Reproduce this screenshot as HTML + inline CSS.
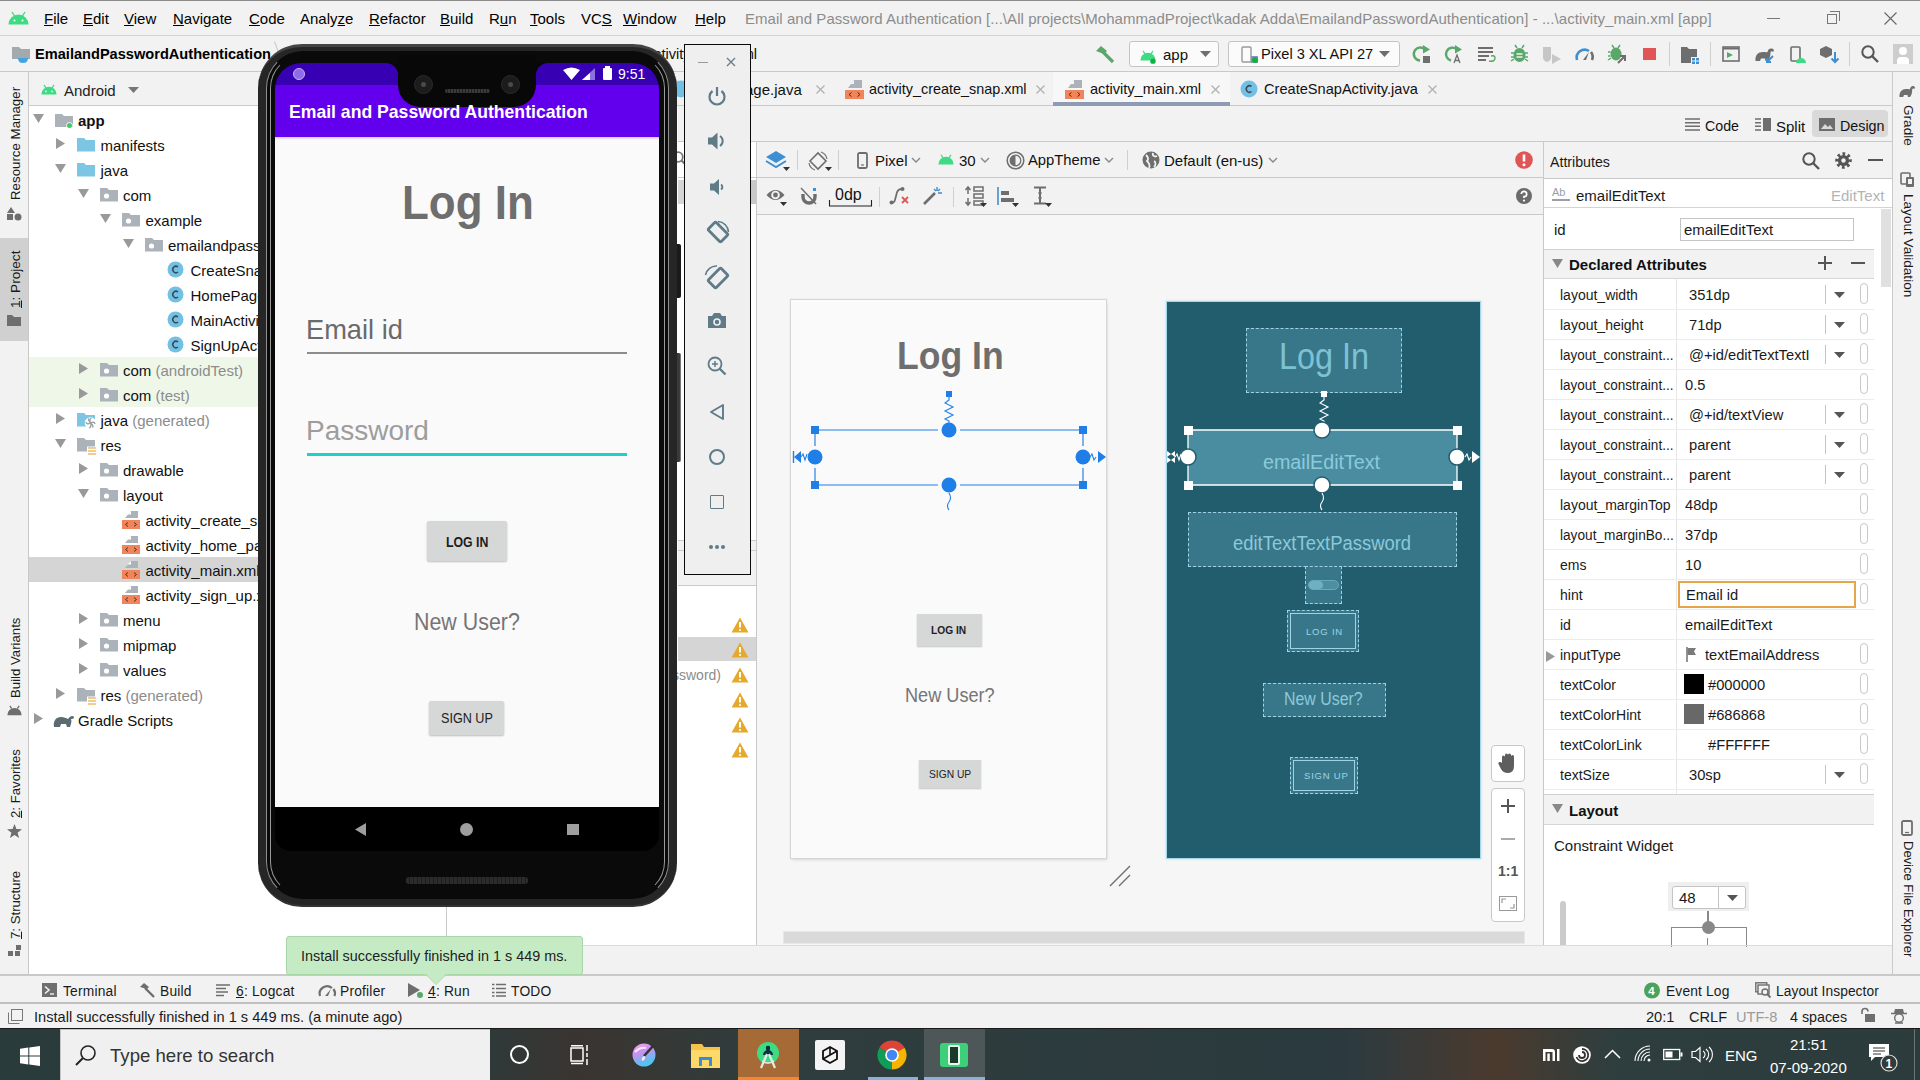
<!DOCTYPE html>
<html><head><meta charset="utf-8">
<style>
*{box-sizing:border-box;margin:0;padding:0}
html,body{width:1920px;height:1080px;overflow:hidden;background:#f2f2f2;font-family:"Liberation Sans",sans-serif;font-size:15px;color:#000}
.a{position:absolute}
.t{position:absolute;white-space:nowrap;line-height:1}
.hl{position:absolute;height:1px;background:#c9c9c9}
.vl{position:absolute;width:1px;background:#c9c9c9}
svg{position:absolute;overflow:visible}
</style></head><body>

<!-- ===== TITLE / MENU BAR ===== -->
<div class="a" style="left:0;top:0;width:1920px;height:1px;background:#8a8a8a"></div>
<div class="a" style="left:0;top:1px;width:1920px;height:35px;background:#f2f2f2"></div>
<div class="hl" style="left:0;top:35px;width:1920px;background:#d4d4d4"></div>
<svg style="left:8px;top:11px" width="21" height="14" viewBox="0 0 21 14"><path d="M0.5 13.5 A10 10 0 0 1 20.5 13.5 Z" fill="#3ddc84"/><path d="M4 1 L6.5 5 M17 1 L14.5 5" stroke="#3ddc84" stroke-width="1.4"/><circle cx="6.5" cy="9.5" r="1" fill="#fff"/><circle cx="14.5" cy="9.5" r="1" fill="#fff"/></svg>
<div id="menu">
<span class="t" style="left:44px;top:11px"><u>F</u>ile</span>
<span class="t" style="left:83px;top:11px"><u>E</u>dit</span>
<span class="t" style="left:124px;top:11px"><u>V</u>iew</span>
<span class="t" style="left:173px;top:11px"><u>N</u>avigate</span>
<span class="t" style="left:249px;top:11px"><u>C</u>ode</span>
<span class="t" style="left:300px;top:11px">Analy<u>z</u>e</span>
<span class="t" style="left:369px;top:11px"><u>R</u>efactor</span>
<span class="t" style="left:440px;top:11px"><u>B</u>uild</span>
<span class="t" style="left:489px;top:11px">R<u>u</u>n</span>
<span class="t" style="left:530px;top:11px"><u>T</u>ools</span>
<span class="t" style="left:581px;top:11px">VC<u>S</u></span>
<span class="t" style="left:623px;top:11px"><u>W</u>indow</span>
<span class="t" style="left:695px;top:11px"><u>H</u>elp</span>
<span class="t" style="left:745px;top:11px;color:#8c8c8c;letter-spacing:0.05px">Email and Password Authentication [...\All projects\MohammadProject\kadak Adda\EmailandPasswordAuthentication] - ...\activity_main.xml [app]</span>
</div>
<div class="a" style="left:1767px;top:18px;width:13px;height:1px;background:#777"></div>
<div class="a" style="left:1827px;top:14px;width:10px;height:10px;border:1px solid #777;border-top-width:1px"></div>
<div class="a" style="left:1830px;top:11px;width:10px;height:10px;border-top:1px solid #777;border-right:1px solid #777"></div>
<svg style="left:1884px;top:12px" width="13" height="13"><path d="M0.5 0.5 L12.5 12.5 M12.5 0.5 L0.5 12.5" stroke="#666" stroke-width="1.1"/></svg>

<!-- ===== NAV / TOOLBAR ===== -->
<div class="hl" style="left:0;top:71px;width:1920px;background:#c9c9c9"></div>
<svg style="left:12px;top:46px" width="20" height="18"><path d="M0 1 H7 L9 3 H18 V13 H0 Z" fill="#a4a9ae"/><path d="M6 12 H16 Q16 17 11 17 Q6 17 6 12 Z" fill="#40a5e0"/></svg>
<span class="t" style="left:35px;top:47px;font-weight:bold;font-size:14.6px">EmailandPasswordAuthentication</span>
<svg style="left:274px;top:41px" width="6" height="14"><path d="M0.5 0.5 L5 13" stroke="#c4c4c4" stroke-width="1"/></svg>
<span class="t" style="left:646px;top:47px;font-size:14.6px;color:#111">activity_main.xml</span>

<!--TOOLBAR-->
<!-- ===== MAIN TOOLBAR ICONS ===== -->
<svg style="left:1095px;top:45px" width="20" height="18"><path d="M1 6 L6 1 L12 6 L9 9 Z" fill="#59a869"/><path d="M8 7 L18 17" stroke="#59a869" stroke-width="3.2"/></svg>
<div class="a" style="left:1129px;top:41px;width:90px;height:26px;border:1px solid #c4c4c4;border-radius:3px;background:#fbfbfb"></div>
<svg style="left:1140px;top:50px" width="16" height="14" viewBox="0 0 21 18"><path d="M0.5 13.5 A10 10 0 0 1 20.5 13.5 Z" fill="#3ddc84"/><path d="M4 1 L6.5 5 M17 1 L14.5 5" stroke="#3ddc84" stroke-width="1.6"/><circle cx="17" cy="14.5" r="3.5" fill="#10b23a"/></svg>
<span class="t" style="left:1163px;top:47px;color:#111">app</span>
<svg style="left:1200px;top:51px" width="11" height="7"><path d="M0 0 H11 L5.5 6 Z" fill="#6e6e6e"/></svg>
<div class="a" style="left:1228px;top:41px;width:172px;height:26px;border:1px solid #c4c4c4;border-radius:3px;background:#fbfbfb"></div>
<svg style="left:1241px;top:46px" width="17" height="18"><rect x="1" y="1" width="9" height="15" rx="1" stroke="#9a9a9a" stroke-width="1.4" fill="none"/><rect x="10" y="10" width="7" height="7" fill="#8a8fd0"/><circle cx="14" cy="14" r="3" fill="#10b23a"/></svg>
<span class="t" style="left:1261px;top:47px;color:#111;font-size:14.6px">Pixel 3 XL API 27</span>
<svg style="left:1379px;top:51px" width="11" height="7"><path d="M0 0 H11 L5.5 6 Z" fill="#6e6e6e"/></svg>
<!-- rerun -->
<svg style="left:1413px;top:45px" width="18" height="18"><path d="M12 4.5 A6.5 6.5 0 1 0 7 15.5" stroke="#59a869" stroke-width="2.4" fill="none"/><path d="M10 0 L17 4.5 L10 8.5 Z" fill="#59a869"/><rect x="10" y="11" width="7" height="7" fill="#6e6e6e"/></svg>
<!-- apply code changes -->
<svg style="left:1445px;top:45px" width="18" height="18"><path d="M12 4.5 A6.5 6.5 0 1 0 6 15.5" stroke="#59a869" stroke-width="2.4" fill="none"/><path d="M10 0 L17 4.5 L10 8.5 Z" fill="#59a869"/><path d="M9 18 L12 10 L15 18 M10 15.5 H14" stroke="#6e6e6e" stroke-width="1.3" fill="none"/></svg>
<!-- lines -->
<svg style="left:1478px;top:47px" width="19" height="17"><path d="M0 1 H15 M0 5 H15 M0 9 H11 M0 13 H8" stroke="#6e6e6e" stroke-width="1.8"/><path d="M11 14 Q17 15 17 11 Q17 8 13 9" stroke="#59a869" stroke-width="1.4" fill="none"/></svg>
<!-- bug -->
<svg style="left:1511px;top:45px" width="17" height="18"><path d="M4 0 L6 3 M13 0 L11 3" stroke="#59a869" stroke-width="1.5"/><ellipse cx="8.5" cy="10" rx="6" ry="7" fill="#59a869"/><path d="M0 8 H3 M14 8 H17 M0 12 H3 M14 12 H17 M0 16 L3 14 M17 16 L14 14" stroke="#59a869" stroke-width="1.5"/><path d="M5.5 9 H11.5 M5.5 12 H11.5" stroke="#f2f2f2" stroke-width="1.4"/></svg>
<!-- attach gray -->
<svg style="left:1542px;top:46px" width="20" height="19"><path d="M1 1 H9 V11 Q9 15 5 16 Q1 15 1 11 Z" fill="#c6c6c6"/><path d="M10 8 L19 13 L10 18 Z" fill="#c6c6c6"/></svg>
<!-- profiler -->
<svg style="left:1575px;top:46px" width="19" height="16"><path d="M2 14 A8 8 0 0 1 14 5" stroke="#3d8fd4" stroke-width="2.6" fill="none"/><path d="M16 6 A8 8 0 0 1 17 14" stroke="#6e6e6e" stroke-width="2.6" fill="none"/><path d="M8 14 L14 6 L11 14 Z" fill="#6e6e6e"/></svg>
<!-- debug attach -->
<svg style="left:1608px;top:45px" width="19" height="19"><path d="M4 0 L6 3 M12 0 L10 3" stroke="#59a869" stroke-width="1.5"/><ellipse cx="8" cy="9" rx="5.5" ry="6.5" fill="#59a869"/><path d="M0 7 H2.5 M0 11 H2.5 M0 15 L3 13" stroke="#59a869" stroke-width="1.5"/><path d="M10 18 L17 11 M12 11 H17 V16" stroke="#6e6e6e" stroke-width="2" fill="none"/></svg>
<div class="a" style="left:1643px;top:48px;width:13px;height:12px;background:#e05555"></div>
<div class="vl" style="left:1669px;top:42px;height:24px;background:#d0d0d0"></div>
<svg style="left:1681px;top:47px" width="19" height="17"><path d="M0 0 H6 L8 2 H16 V10 H10 V16 H0 Z" fill="#6e6e6e"/><rect x="11" y="11" width="3" height="2.5" fill="#3d8fd4"/><rect x="15" y="11" width="3" height="2.5" fill="#3d8fd4"/><rect x="11" y="14.5" width="3" height="2.5" fill="#3d8fd4"/><rect x="15" y="14.5" width="3" height="2.5" fill="#3d8fd4"/></svg>
<div class="vl" style="left:1710px;top:42px;height:24px;background:#d0d0d0"></div>
<svg style="left:1722px;top:46px" width="18" height="16"><rect x="1" y="1" width="16" height="14" stroke="#6e6e6e" stroke-width="1.6" fill="none"/><path d="M1 2.5 H17" stroke="#6e6e6e" stroke-width="2"/><path d="M5 6 L11 9 L5 12 Z" fill="#59a869"/></svg>
<svg style="left:1755px;top:46px" width="20" height="18"><path d="M0.5 15 C0 9 3 6 8 6 C10 6 11 6.5 12.5 6 C13 3 15 2 17 2.5 C19 3 19.5 5 18 6 C17 5 16 5 15.5 6.5 C15.5 9 15 11 14 13 L13 15 H10.5 L10 12.5 H6 L5 15 Z" fill="#6e6e6e"/><path d="M18 10 L12 16 M12 12 V16 H16" stroke="#3d8fd4" stroke-width="2" fill="none"/></svg>
<svg style="left:1790px;top:46px" width="17" height="18"><rect x="1" y="1" width="9" height="14" rx="1" stroke="#6e6e6e" stroke-width="1.6" fill="none"/><path d="M6 17 A5 5 0 0 1 16 17 Z" fill="#3ddc84"/></svg>
<svg style="left:1820px;top:46px" width="19" height="18"><path d="M6 0 L12 3 V9 L6 12 L0 9 V3 Z" fill="#6e6e6e"/><path d="M15 6 V16 M11.5 12.5 L15 16 L18.5 12.5" stroke="#3d8fd4" stroke-width="2" fill="none"/></svg>
<div class="vl" style="left:1849px;top:42px;height:24px;background:#d0d0d0"></div>
<svg style="left:1861px;top:45px" width="18" height="18"><circle cx="7" cy="7" r="5.7" stroke="#555" stroke-width="2" fill="none"/><path d="M11 11 L17 17" stroke="#555" stroke-width="2.4"/></svg>
<div class="a" style="left:1893px;top:44px;width:20px;height:20px;background:#cdcdcd"></div>
<div class="a" style="left:1899px;top:47px;width:8px;height:8px;border-radius:50%;background:#fff"></div>
<div class="a" style="left:1897px;top:57px;width:12px;height:7px;border-radius:4px 4px 0 0;background:#fff"></div>

<!--/TOOLBAR-->
<!-- ===== LEFT TOOL STRIP ===== -->
<div class="a" style="left:0;top:72px;width:28px;height:903px;background:#f2f2f2"></div>
<div class="vl" style="left:28px;top:72px;height:903px"></div>

<!-- ===== PROJECT PANEL ===== -->
<div class="a" style="left:29px;top:72px;width:417px;height:33px;background:#f2f2f2"></div>
<div class="hl" style="left:29px;top:105px;width:417px"></div>
<div class="a" style="left:29px;top:106px;width:417px;height:868px;background:#fff"></div>
<div class="vl" style="left:446px;top:72px;height:902px"></div>
<svg style="left:41px;top:84px" width="16" height="11" viewBox="0 0 21 14"><path d="M0.5 13.5 A10 10 0 0 1 20.5 13.5 Z" fill="#3ddc84"/><path d="M4 1 L6.5 5 M17 1 L14.5 5" stroke="#3ddc84" stroke-width="1.6"/><circle cx="6.5" cy="9.5" r="1.1" fill="#fff"/><circle cx="14.5" cy="9.5" r="1.1" fill="#fff"/></svg>
<span class="t" style="left:64px;top:83px;color:#222">Android</span>
<svg style="left:128px;top:87px" width="11" height="7"><path d="M0 0 H11 L5.5 6 Z" fill="#777"/></svg>
<!--TREE-->
<svg style="left:32.5px;top:114px" width="11" height="10"><path d="M0 0 H11 L5.5 9 Z" fill="#999"/></svg>
<svg style="left:55px;top:114px" width="19" height="15"><path d="M0 0 H7 L9 2 H18 V13 H0 Z" fill="#abb2b9"/><circle cx="14.5" cy="11.5" r="3.2" fill="#fff"/><circle cx="14.5" cy="11.5" r="2.5" fill="#3ec96b"/></svg>
<span class="t" style="left:78.0px;top:113px;font-weight:bold;color:#111">app</span>
<svg style="left:56.0px;top:138px" width="10" height="11"><path d="M0 0 L9 5.5 L0 11 Z" fill="#999"/></svg>
<svg style="left:77px;top:138px" width="19" height="14"><path d="M0 0 H7 L9 2 H18 V13.5 H0 Z" fill="#7cc6e4"/></svg>
<span class="t" style="left:100.5px;top:138px;color:#111">manifests</span>
<svg style="left:55.0px;top:164px" width="11" height="10"><path d="M0 0 H11 L5.5 9 Z" fill="#999"/></svg>
<svg style="left:77px;top:163px" width="19" height="14"><path d="M0 0 H7 L9 2 H18 V13.5 H0 Z" fill="#7cc6e4"/></svg>
<span class="t" style="left:100.5px;top:163px;color:#111">java</span>
<svg style="left:77.5px;top:189px" width="11" height="10"><path d="M0 0 H11 L5.5 9 Z" fill="#999"/></svg>
<svg style="left:100px;top:188px" width="19" height="14"><path d="M0 0 H7 L9 2 H18 V13.5 H0 Z" fill="#abb2b9"/><circle cx="6.5" cy="8" r="2.6" fill="#fff"/></svg>
<span class="t" style="left:123.0px;top:188px;color:#111">com</span>
<svg style="left:100.0px;top:214px" width="11" height="10"><path d="M0 0 H11 L5.5 9 Z" fill="#999"/></svg>
<svg style="left:122px;top:213px" width="19" height="14"><path d="M0 0 H7 L9 2 H18 V13.5 H0 Z" fill="#abb2b9"/><circle cx="6.5" cy="8" r="2.6" fill="#fff"/></svg>
<span class="t" style="left:145.5px;top:213px;color:#111">example</span>
<svg style="left:122.5px;top:239px" width="11" height="10"><path d="M0 0 H11 L5.5 9 Z" fill="#999"/></svg>
<svg style="left:145px;top:238px" width="19" height="14"><path d="M0 0 H7 L9 2 H18 V13.5 H0 Z" fill="#abb2b9"/><circle cx="6.5" cy="8" r="2.6" fill="#fff"/></svg>
<span class="t" style="left:168.0px;top:238px;color:#111">emailandpasswordauthentication</span>
<svg style="left:167px;top:261px" width="17" height="17"><circle cx="8.5" cy="8.5" r="8" fill="#72c1e4"/><path d="M11 6 A3.2 3.2 0 1 0 11 11" stroke="#3b4a52" stroke-width="1.5" fill="none"/></svg>
<span class="t" style="left:190.5px;top:263px;color:#111">CreateSnapActivity</span>
<svg style="left:167px;top:286px" width="17" height="17"><circle cx="8.5" cy="8.5" r="8" fill="#72c1e4"/><path d="M11 6 A3.2 3.2 0 1 0 11 11" stroke="#3b4a52" stroke-width="1.5" fill="none"/></svg>
<span class="t" style="left:190.5px;top:288px;color:#111">HomePageActivity</span>
<svg style="left:167px;top:311px" width="17" height="17"><circle cx="8.5" cy="8.5" r="8" fill="#72c1e4"/><path d="M11 6 A3.2 3.2 0 1 0 11 11" stroke="#3b4a52" stroke-width="1.5" fill="none"/></svg>
<span class="t" style="left:190.5px;top:313px;color:#111">MainActivity</span>
<svg style="left:167px;top:336px" width="17" height="17"><circle cx="8.5" cy="8.5" r="8" fill="#72c1e4"/><path d="M11 6 A3.2 3.2 0 1 0 11 11" stroke="#3b4a52" stroke-width="1.5" fill="none"/></svg>
<span class="t" style="left:190.5px;top:338px;color:#111">SignUpActivity</span>
<div class="a" style="left:29px;top:357px;width:417px;height:25px;background:#eff7e9"></div>
<svg style="left:78.5px;top:363px" width="10" height="11"><path d="M0 0 L9 5.5 L0 11 Z" fill="#999"/></svg>
<svg style="left:100px;top:363px" width="19" height="14"><path d="M0 0 H7 L9 2 H18 V13.5 H0 Z" fill="#abb2b9"/><circle cx="6.5" cy="8" r="2.6" fill="#fff"/></svg>
<span class="t" style="left:123.0px;top:363px;color:#111">com<span style="color:#8c8c8c"> (androidTest)</span></span>
<div class="a" style="left:29px;top:382px;width:417px;height:25px;background:#eff7e9"></div>
<svg style="left:78.5px;top:388px" width="10" height="11"><path d="M0 0 L9 5.5 L0 11 Z" fill="#999"/></svg>
<svg style="left:100px;top:388px" width="19" height="14"><path d="M0 0 H7 L9 2 H18 V13.5 H0 Z" fill="#abb2b9"/><circle cx="6.5" cy="8" r="2.6" fill="#fff"/></svg>
<span class="t" style="left:123.0px;top:388px;color:#111">com<span style="color:#8c8c8c"> (test)</span></span>
<svg style="left:56.0px;top:413px" width="10" height="11"><path d="M0 0 L9 5.5 L0 11 Z" fill="#999"/></svg>
<svg style="left:77px;top:413px" width="19" height="15"><path d="M0 0 H7 L9 2 H18 V13.5 H0 Z" fill="#7cc6e4"/><circle cx="13.5" cy="10" r="5.8" fill="#fff"/><path d="M13.5 10 Q12 6 14.5 5 M13.5 10 Q17.5 8 18 11 M13.5 10 Q15 14 12 15 M13.5 10 Q9.5 12 9 9 M13.5 10 Q10.5 6.5 12 5.5 M13.5 10 Q17 12.5 15.5 14.5" stroke="#9aa0a6" stroke-width="1.3" fill="none"/></svg>
<span class="t" style="left:100.5px;top:413px;color:#111">java<span style="color:#8c8c8c"> (generated)</span></span>
<svg style="left:55.0px;top:439px" width="11" height="10"><path d="M0 0 H11 L5.5 9 Z" fill="#999"/></svg>
<svg style="left:77px;top:438px" width="19" height="16"><path d="M0 0 H7 L9 2 H18 V13.5 H0 Z" fill="#abb2b9"/><rect x="10" y="8.5" width="9" height="8" fill="#fff"/><path d="M11 10 H19 M11 13 H19 M11 16 H19" stroke="#ebbf6e" stroke-width="1.6"/></svg>
<span class="t" style="left:100.5px;top:438px;color:#111">res</span>
<svg style="left:78.5px;top:463px" width="10" height="11"><path d="M0 0 L9 5.5 L0 11 Z" fill="#999"/></svg>
<svg style="left:100px;top:463px" width="19" height="14"><path d="M0 0 H7 L9 2 H18 V13.5 H0 Z" fill="#abb2b9"/><circle cx="6.5" cy="8" r="2.6" fill="#fff"/></svg>
<span class="t" style="left:123.0px;top:463px;color:#111">drawable</span>
<svg style="left:77.5px;top:489px" width="11" height="10"><path d="M0 0 H11 L5.5 9 Z" fill="#999"/></svg>
<svg style="left:100px;top:488px" width="19" height="14"><path d="M0 0 H7 L9 2 H18 V13.5 H0 Z" fill="#abb2b9"/><circle cx="6.5" cy="8" r="2.6" fill="#fff"/></svg>
<span class="t" style="left:123.0px;top:488px;color:#111">layout</span>
<svg style="left:122px;top:510px" width="18" height="19"><path d="M9 1 H16 V8 H3 Z" fill="#abb2b9"/><path d="M5.5 4.5 L9 1 V4.5 Z" fill="#fff"/><rect x="0" y="10" width="18" height="9" fill="#f0845a"/><path d="M6 12.5 L3.5 14.5 L6 16.5 M12 12.5 L14.5 14.5 L12 16.5" stroke="#5a2d1a" stroke-width="1" fill="none"/></svg>
<span class="t" style="left:145.5px;top:513px;color:#111">activity_create_snap.xml</span>
<svg style="left:122px;top:535px" width="18" height="19"><path d="M9 1 H16 V8 H3 Z" fill="#abb2b9"/><path d="M5.5 4.5 L9 1 V4.5 Z" fill="#fff"/><rect x="0" y="10" width="18" height="9" fill="#f0845a"/><path d="M6 12.5 L3.5 14.5 L6 16.5 M12 12.5 L14.5 14.5 L12 16.5" stroke="#5a2d1a" stroke-width="1" fill="none"/></svg>
<span class="t" style="left:145.5px;top:538px;color:#111">activity_home_page.xml</span>
<div class="a" style="left:29px;top:557px;width:417px;height:25px;background:#d5d5d5"></div>
<svg style="left:122px;top:560px" width="18" height="19"><path d="M9 1 H16 V8 H3 Z" fill="#abb2b9"/><path d="M5.5 4.5 L9 1 V4.5 Z" fill="#fff"/><rect x="0" y="10" width="18" height="9" fill="#f0845a"/><path d="M6 12.5 L3.5 14.5 L6 16.5 M12 12.5 L14.5 14.5 L12 16.5" stroke="#5a2d1a" stroke-width="1" fill="none"/></svg>
<span class="t" style="left:145.5px;top:563px;color:#111">activity_main.xml</span>
<svg style="left:122px;top:585px" width="18" height="19"><path d="M9 1 H16 V8 H3 Z" fill="#abb2b9"/><path d="M5.5 4.5 L9 1 V4.5 Z" fill="#fff"/><rect x="0" y="10" width="18" height="9" fill="#f0845a"/><path d="M6 12.5 L3.5 14.5 L6 16.5 M12 12.5 L14.5 14.5 L12 16.5" stroke="#5a2d1a" stroke-width="1" fill="none"/></svg>
<span class="t" style="left:145.5px;top:588px;color:#111">activity_sign_up.xml</span>
<svg style="left:78.5px;top:613px" width="10" height="11"><path d="M0 0 L9 5.5 L0 11 Z" fill="#999"/></svg>
<svg style="left:100px;top:613px" width="19" height="14"><path d="M0 0 H7 L9 2 H18 V13.5 H0 Z" fill="#abb2b9"/><circle cx="6.5" cy="8" r="2.6" fill="#fff"/></svg>
<span class="t" style="left:123.0px;top:613px;color:#111">menu</span>
<svg style="left:78.5px;top:638px" width="10" height="11"><path d="M0 0 L9 5.5 L0 11 Z" fill="#999"/></svg>
<svg style="left:100px;top:638px" width="19" height="14"><path d="M0 0 H7 L9 2 H18 V13.5 H0 Z" fill="#abb2b9"/><circle cx="6.5" cy="8" r="2.6" fill="#fff"/></svg>
<span class="t" style="left:123.0px;top:638px;color:#111">mipmap</span>
<svg style="left:78.5px;top:663px" width="10" height="11"><path d="M0 0 L9 5.5 L0 11 Z" fill="#999"/></svg>
<svg style="left:100px;top:663px" width="19" height="14"><path d="M0 0 H7 L9 2 H18 V13.5 H0 Z" fill="#abb2b9"/><circle cx="6.5" cy="8" r="2.6" fill="#fff"/></svg>
<span class="t" style="left:123.0px;top:663px;color:#111">values</span>
<svg style="left:56.0px;top:688px" width="10" height="11"><path d="M0 0 L9 5.5 L0 11 Z" fill="#999"/></svg>
<svg style="left:77px;top:688px" width="19" height="16"><path d="M0 0 H7 L9 2 H18 V13.5 H0 Z" fill="#abb2b9"/><rect x="10" y="8.5" width="9" height="8" fill="#fff"/><path d="M11 10 H19 M11 13 H19 M11 16 H19" stroke="#ebbf6e" stroke-width="1.6"/></svg>
<span class="t" style="left:100.5px;top:688px;color:#111">res<span style="color:#8c8c8c"> (generated)</span></span>
<svg style="left:33.5px;top:713px" width="10" height="11"><path d="M0 0 L9 5.5 L0 11 Z" fill="#999"/></svg>
<svg style="left:53px;top:712px" width="22" height="16"><path d="M1 15 C0 9 3 5 8 5 C11 5 13 6 15 7 C17 4 20 3 21 5 C21 7 19 7 18 7 C19 9 18 12 17 15 H14 L13 12 H8 L7 15 H4 Z" fill="#5c6a72"/></svg>
<span class="t" style="left:78.0px;top:713px;color:#111">Gradle Scripts</span>

<!--/TREE-->

<!-- ===== COMPONENT TREE (behind phone) ===== -->
<div class="a" style="left:447px;top:106px;width:309px;height:839px;background:#fff"></div>

<!-- ===== EDITOR TABS ===== -->
<div class="a" style="left:447px;top:72px;width:1445px;height:33px;background:#f2f2f2"></div>
<div class="hl" style="left:447px;top:105px;width:1445px"></div>

<!-- ===== DESIGN TOOLBAR ===== -->
<div class="hl" style="left:756px;top:141px;width:1136px"></div>
<div class="vl" style="left:756px;top:142px;height:803px"></div>
<div class="hl" style="left:756px;top:177px;width:787px"></div>
<div class="hl" style="left:756px;top:214px;width:787px"></div>
<div class="a" style="left:757px;top:215px;width:786px;height:730px;background:#f6f6f6"></div>
<!--CANVAS-->
<!-- ===== DESIGN CARD ===== -->
<div class="a" style="left:791px;top:300px;width:315px;height:558px;background:#fafafa;box-shadow:0 0 1px 1px #d6d6d6,1px 2px 3px rgba(0,0,0,0.12)"></div>
<span class="t" style="left:897px;top:336px;color:#6e6e6e;font-size:39.5px;font-weight:bold;transform:scaleX(0.9);transform-origin:0 0">Log In</span>
<svg style="left:790px;top:388px" width="320" height="130">
 <g stroke="#1f7fe6" fill="#1f7fe6">
  <rect x="156" y="3" width="6" height="6" stroke="none"/>
  <path d="M159 9 V12 L155 15 L163 19 L155 23 L163 27 L155 31 L159 33 V35" fill="none" stroke-width="1.1"/>
  <path d="M25 42 H148 M170 42 H293 M25 97 H148 M170 97 H293 M25 42 V58 M25 80 V97 M293 42 V58 M293 80 V97" fill="none" stroke-width="1.15"/>
  <rect x="21" y="38" width="8" height="8" stroke="none"/><rect x="289" y="38" width="8" height="8" stroke="none"/>
  <rect x="21" y="93" width="8" height="8" stroke="none"/><rect x="289" y="93" width="8" height="8" stroke="none"/>
  <circle cx="159" cy="42" r="7.5" stroke="none"/><circle cx="159" cy="97" r="7.5" stroke="none"/>
  <circle cx="25" cy="69" r="7.5" stroke="none"/><circle cx="293" cy="69" r="7.5" stroke="none"/>
  <path d="M11 63 L4 69 L11 75 Z" stroke="none"/><path d="M3.5 63 V75" stroke-width="1.4"/>
  <path d="M11 69 L13 66 L15 72 L17 66" fill="none" stroke-width="1.1"/>
  <path d="M300 69 L302 66 L304 72 L306 69" fill="none" stroke-width="1.1"/>
  <path d="M308 63 V75 L316 69 Z" stroke="none"/>
  <path d="M159 105 Q162 110 159 114 Q156 118 159 122" fill="none" stroke-width="1.1"/>
 </g>
</svg>
<div class="a" style="left:917px;top:614px;width:65px;height:32px;background:#d6d7d7;box-shadow:0 1px 1.5px rgba(0,0,0,0.22)"></div>
<span class="t" style="left:931px;top:624px;color:#1e1e1e;font-size:11.6px;font-weight:bold;transform:scaleX(0.88);transform-origin:0 0">LOG IN</span>
<span class="t" style="left:905px;top:686px;color:#757575;font-size:19.5px;transform:scaleX(0.93);transform-origin:0 0">New User?</span>
<div class="a" style="left:919px;top:760px;width:62px;height:28px;background:#d6d7d7;box-shadow:0 1px 1.5px rgba(0,0,0,0.22)"></div>
<span class="t" style="left:929px;top:769px;color:#222;font-size:11.8px;transform:scaleX(0.87);transform-origin:0 0">SIGN UP</span>
<svg style="left:1108px;top:864px" width="26" height="24"><path d="M2 22 L22 2 M11 22 L22 11" stroke="#6e6e6e" stroke-width="1.4"/></svg>

<!-- ===== BLUEPRINT ===== -->
<div class="a" style="left:1166px;top:301px;width:315px;height:558px;background:#225d6e;border:1px solid #a4d8e8;box-shadow:0 0 2px rgba(140,200,230,0.6)"></div>
<div class="a" style="left:1246px;top:328px;width:156px;height:65px;background:#387789;border:1px dashed #9fd3e3"></div>
<span class="t" style="left:1279px;top:339px;color:#7cc2d6;font-size:36px;transform:scaleX(0.9);transform-origin:0 0">Log In</span>
<div class="a" style="left:1188px;top:512px;width:269px;height:55px;background:#387789;border:1px dashed #9fd3e3"></div>
<span class="t" style="left:1233px;top:534px;color:#8bc9da;font-size:19.3px;transform:scaleX(0.955);transform-origin:0 0">editTextTextPassword</span>
<div class="a" style="left:1305px;top:566px;width:37px;height:38px;background:#387789;border:1px dashed #9fd3e3"></div>
<div class="a" style="left:1308px;top:580px;width:31px;height:10px;border-radius:5px;background:#4d8ea0;border:1px solid #6aa9ba"></div>
<div class="a" style="left:1309px;top:581px;width:14px;height:8px;border-radius:4px;background:#6fb0c2"></div>
<div class="a" style="left:1287px;top:610px;width:72px;height:42px;background:#387789;border:1px dashed #9fd3e3"></div>
<div class="a" style="left:1290px;top:613px;width:66px;height:36px;border:1px solid #9fd3e3"></div>
<span class="t" style="left:1306px;top:627px;color:#9fd3e3;font-size:9.5px;letter-spacing:0.8px">LOG IN</span>
<div class="a" style="left:1263px;top:683px;width:123px;height:34px;background:#387789;border:1px dashed #9fd3e3"></div>
<span class="t" style="left:1284px;top:690px;color:#8bc9da;font-size:18.3px;transform:scaleX(0.87);transform-origin:0 0">New User?</span>
<div class="a" style="left:1290px;top:757px;width:68px;height:37px;background:#387789;border:1px dashed #9fd3e3"></div>
<div class="a" style="left:1293px;top:760px;width:62px;height:31px;border:1px solid #9fd3e3"></div>
<span class="t" style="left:1304px;top:771px;color:#9fd3e3;font-size:9.5px;letter-spacing:0.8px">SIGN UP</span>
<div class="a" style="left:1188px;top:430px;width:269px;height:55px;background:#4a8da1"></div>
<span class="t" style="left:1263px;top:453px;color:#8ccadb;font-size:19.7px">emailEditText</span>
<svg style="left:1165px;top:388px" width="320" height="130">
 <g>
  <rect x="156" y="3" width="6" height="6" fill="#fff"/>
  <path d="M159 9 V12 L155 15 L163 19 L155 23 L163 27 L155 31 L159 33 V35" fill="none" stroke="#fff" stroke-width="1.1"/>
  <path d="M23 42 H294 M23 97 H294 M23 42 V97 M292 42 V97" fill="none" stroke="#fff" stroke-width="1.3"/>
  <rect x="19" y="38" width="9" height="9" fill="#fff"/><rect x="288" y="38" width="9" height="9" fill="#fff"/>
  <rect x="19" y="93" width="9" height="9" fill="#fff"/><rect x="288" y="93" width="9" height="9" fill="#fff"/>
  <circle cx="157" cy="42" r="8" fill="#fff" stroke="#225d6e" stroke-width="1.5"/><circle cx="157" cy="97" r="8" fill="#fff" stroke="#225d6e" stroke-width="1.5"/>
  <circle cx="23" cy="69" r="8" fill="#fff" stroke="#225d6e" stroke-width="1.5"/><circle cx="292" cy="69" r="8" fill="#fff" stroke="#225d6e" stroke-width="1.5"/>
  <path d="M2 63 V75 L10 69 Z M10 63 V75 L2 69 Z" fill="#fff"/>
  <path d="M10 69 L12 66 L14 72 L16 66" fill="none" stroke="#fff" stroke-width="1.1"/>
  <path d="M300 69 L302 66 L304 72 L306 69" fill="none" stroke="#fff" stroke-width="1.1"/>
  <path d="M307 63 V75 L315 69 Z" fill="#fff"/>
  <path d="M157 105 Q160 110 157 114 Q154 118 157 122" fill="none" stroke="#fff" stroke-width="1.1"/>
 </g>
</svg>

<!-- ===== ZOOM CONTROLS ===== -->
<div class="a" style="left:1491px;top:745px;width:34px;height:37px;border-radius:4px;background:#fff;border:1px solid #c8c8c8"></div>
<svg style="left:1498px;top:753px" width="20" height="21"><path d="M4 10 V4 Q4 2.5 5.5 2.5 Q7 2.5 7 4 V9 V2 Q7 0.5 8.5 0.5 Q10 0.5 10 2 V9 V2 Q10 0.5 11.5 0.5 Q13 0.5 13 2 V9 V3.5 Q13 2 14.5 2 Q16 2 16 3.5 V13 Q16 20 10 20 Q5 20 3 16 L0.5 11 Q0 9.5 1.5 9 Q3 8.5 4 10 Z" fill="#5e5e5e"/></svg>
<div class="a" style="left:1491px;top:788px;width:34px;height:134px;border-radius:4px;background:#fff;border:1px solid #c8c8c8"></div>
<svg style="left:1501px;top:799px" width="14" height="14"><path d="M7 0 V14 M0 7 H14" stroke="#555" stroke-width="2"/></svg>
<div class="a" style="left:1501px;top:838px;width:14px;height:2px;background:#aaa"></div>
<span class="t" style="left:1498px;top:864px;color:#555;font-size:14px;font-weight:bold">1:1</span>
<div class="a" style="left:1499px;top:896px;width:18px;height:15px;border:1.5px solid #999"></div>
<svg style="left:1502px;top:899px" width="12" height="9"><path d="M0 4 V0 H4 M12 5 V9 H8" stroke="#999" stroke-width="1.2" fill="none"/></svg>
<!-- h scrollbar -->
<div class="a" style="left:783px;top:931px;width:742px;height:13px;background:#dadada;border:1px solid #e8e8e8"></div>

<!--/CANVAS-->
<div class="vl" style="left:1543px;top:142px;height:803px"></div>

<!--TABS-->
<!-- ===== TABS ===== -->
<svg style="left:672px;top:80px" width="18" height="18"><circle cx="9" cy="9" r="8.5" fill="#72c1e4"/></svg>
<span class="t" style="left:695px;top:82px;color:#111">HomePage.java</span>
<svg style="left:816px;top:85px" width="9" height="9"><path d="M0.5 0.5 L8.5 8.5 M8.5 0.5 L0.5 8.5" stroke="#b0b0b0" stroke-width="1.2"/></svg>
<svg style="left:845px;top:80px" width="19" height="19"><path d="M9 0 H17 V8 H3 Z" fill="#abb2b9"/><path d="M5 4 L9 0 V4 Z" fill="#f2f2f2"/><rect x="0" y="10" width="19" height="9" fill="#f0845a"/><path d="M6.5 12.5 L4 14.5 L6.5 16.5 M12.5 12.5 L15 14.5 L12.5 16.5" stroke="#5a2d1a" stroke-width="1" fill="none"/></svg>
<span class="t" style="left:869px;top:82px;color:#111;font-size:14.4px">activity_create_snap.xml</span>
<svg style="left:1036px;top:85px" width="9" height="9"><path d="M0.5 0.5 L8.5 8.5 M8.5 0.5 L0.5 8.5" stroke="#b0b0b0" stroke-width="1.2"/></svg>
<div class="a" style="left:1053px;top:72px;width:177px;height:33px;background:#f7f7f7"></div>
<div class="a" style="left:1053px;top:102px;width:177px;height:4px;background:#8d9bb5"></div>
<svg style="left:1065px;top:80px" width="19" height="19"><path d="M9 0 H17 V8 H3 Z" fill="#abb2b9"/><path d="M5 4 L9 0 V4 Z" fill="#f7f7f7"/><rect x="0" y="10" width="19" height="9" fill="#f0845a"/><path d="M6.5 12.5 L4 14.5 L6.5 16.5 M12.5 12.5 L15 14.5 L12.5 16.5" stroke="#5a2d1a" stroke-width="1" fill="none"/></svg>
<span class="t" style="left:1090px;top:82px;color:#111;font-size:14.6px">activity_main.xml</span>
<svg style="left:1211px;top:85px" width="9" height="9"><path d="M0.5 0.5 L8.5 8.5 M8.5 0.5 L0.5 8.5" stroke="#b0b0b0" stroke-width="1.2"/></svg>
<svg style="left:1240px;top:80px" width="18" height="18"><circle cx="9" cy="9" r="8.5" fill="#72c1e4"/><path d="M11.5 6.5 A3.2 3.2 0 1 0 11.5 11.5" stroke="#3b4a52" stroke-width="1.5" fill="none"/></svg>
<span class="t" style="left:1264px;top:82px;color:#111;font-size:14.6px">CreateSnapActivity.java</span>
<svg style="left:1428px;top:85px" width="9" height="9"><path d="M0.5 0.5 L8.5 8.5 M8.5 0.5 L0.5 8.5" stroke="#b0b0b0" stroke-width="1.2"/></svg>

<!-- ===== CODE/SPLIT/DESIGN ===== -->
<svg style="left:1685px;top:118px" width="16" height="13"><path d="M0 1 H15 M0 4.7 H15 M0 8.3 H15 M0 12 H15" stroke="#6e6e6e" stroke-width="1.6"/></svg>
<span class="t" style="left:1705px;top:119px;color:#111;font-size:14.2px">Code</span>
<svg style="left:1755px;top:118px" width="16" height="13"><path d="M0 1 H6 M0 4.7 H6 M0 8.3 H6 M0 12 H6" stroke="#6e6e6e" stroke-width="1.6"/><rect x="8" y="0" width="8" height="13" fill="#6e6e6e"/></svg>
<span class="t" style="left:1776px;top:119px;color:#111">Split</span>
<div class="a" style="left:1812px;top:110px;width:76px;height:27px;border-radius:4px;background:#d9d9d9"></div>
<svg style="left:1819px;top:118px" width="16" height="13"><rect x="0" y="0" width="16" height="13" fill="#6e6e6e"/><path d="M2 11 L6 6 L9 9 L11 7 L14 11 Z" fill="#d9d9d9"/></svg>
<span class="t" style="left:1840px;top:119px;color:#111;font-size:14.3px">Design</span>

<!-- ===== SURFACE TOOLBAR ROW1 ===== -->
<svg style="left:765px;top:150px" width="25" height="22"><path d="M11 1 L21 7 L11 13 L1 7 Z" fill="#3d8fd4"/><path d="M1 11 L11 17 L21 11" stroke="#3d8fd4" stroke-width="2" fill="none"/><path d="M18 17 H25 L21.5 21 Z" fill="#333"/></svg>
<div class="vl" style="left:797px;top:150px;height:20px;background:#d0d0d0"></div>
<svg style="left:808px;top:151px" width="24" height="21"><path d="M2 10 L10 2 L18 10 L10 18 Z" stroke="#6e6e6e" stroke-width="1.6" fill="none"/><path d="M13 1 A9 9 0 0 1 19 8 M1 12 A9 9 0 0 0 7 19" stroke="#6e6e6e" stroke-width="1.2" fill="none"/><path d="M17 16 H24 L20.5 20 Z" fill="#333"/></svg>
<div class="vl" style="left:838px;top:150px;height:20px;background:#d0d0d0"></div>
<svg style="left:857px;top:152px" width="11" height="17"><rect x="1" y="1" width="9" height="15" rx="1.5" stroke="#6e6e6e" stroke-width="1.8" fill="none"/><path d="M4 13 H7" stroke="#6e6e6e" stroke-width="1.2"/></svg>
<span class="t" style="left:875px;top:153px;color:#111">Pixel</span>
<svg style="left:911px;top:157px" width="10" height="6"><path d="M1 1 L5 5 L9 1" stroke="#888" stroke-width="1.4" fill="none"/></svg>
<svg style="left:938px;top:154px" width="16" height="11" viewBox="0 0 21 14"><path d="M0.5 13.5 A10 10 0 0 1 20.5 13.5 Z" fill="#3ddc84"/><path d="M4 1 L6.5 5 M17 1 L14.5 5" stroke="#3ddc84" stroke-width="1.6"/></svg>
<span class="t" style="left:959px;top:153px;color:#111">30</span>
<svg style="left:980px;top:157px" width="10" height="6"><path d="M1 1 L5 5 L9 1" stroke="#888" stroke-width="1.4" fill="none"/></svg>
<svg style="left:1006px;top:151px" width="19" height="19"><circle cx="9.5" cy="9.5" r="8.3" stroke="#6e6e6e" stroke-width="1.5" fill="none"/><circle cx="9.5" cy="9.5" r="5.3" stroke="#6e6e6e" stroke-width="1.3" fill="none"/><path d="M9.5 4.2 A5.3 5.3 0 0 0 9.5 14.8 Z" fill="#6e6e6e"/></svg>
<span class="t" style="left:1028px;top:153px;color:#111;font-size:14.8px">AppTheme</span>
<svg style="left:1104px;top:157px" width="10" height="6"><path d="M1 1 L5 5 L9 1" stroke="#888" stroke-width="1.4" fill="none"/></svg>
<div class="vl" style="left:1127px;top:150px;height:20px;background:#d0d0d0"></div>
<svg style="left:1142px;top:151px" width="18" height="18"><circle cx="9" cy="9" r="8.5" fill="#6e6e6e"/><path d="M4 4 C6 6 7 8 5 10 C7 12 8 15 7 17 M11 2 C10 5 13 6 15 5 M12 10 C14 11 14 14 12 16" stroke="#f2f2f2" stroke-width="1.8" fill="none"/></svg>
<span class="t" style="left:1164px;top:153px;color:#111">Default (en-us)</span>
<svg style="left:1268px;top:157px" width="10" height="6"><path d="M1 1 L5 5 L9 1" stroke="#888" stroke-width="1.4" fill="none"/></svg>
<svg style="left:1515px;top:151px" width="18" height="18"><circle cx="9" cy="9" r="8.8" fill="#e05555"/><path d="M9 3.5 V10.5" stroke="#fff" stroke-width="2.6"/><circle cx="9" cy="13.8" r="1.5" fill="#fff"/></svg>

<!-- ===== SURFACE TOOLBAR ROW2 ===== -->
<svg style="left:766px;top:186px" width="22" height="21"><path d="M0.5 9 Q9.5 -1 18.5 9 Q9.5 19 0.5 9 Z" fill="#6e6e6e"/><circle cx="9.5" cy="9" r="4.3" fill="#f2f2f2"/><circle cx="9.5" cy="9" r="2.4" fill="#6e6e6e"/><path d="M14 16 H21 L17.5 20 Z" fill="#333"/></svg>
<svg style="left:800px;top:187px" width="20" height="19"><path d="M3 7 V10 A6 6 0 0 0 15 10 V7" stroke="#6e6e6e" stroke-width="3.4" fill="none"/><path d="M1 1 L16 17" stroke="#6e6e6e" stroke-width="1.4"/><rect x="13" y="1" width="3" height="3" fill="#3d8fd4"/></svg>
<span class="t" style="left:835px;top:187px;color:#111;font-size:16px">0dp</span>
<svg style="left:829px;top:200px" width="43" height="7"><path d="M0.5 0 V6 H42.5 V0" stroke="#222" stroke-width="1.1" fill="none"/></svg>
<div class="vl" style="left:879px;top:187px;height:20px;background:#d0d0d0"></div>
<svg style="left:889px;top:186px" width="22" height="20"><path d="M2 17 C6 17 6 14 7 10 C8 5 9 3 13 3" stroke="#6e6e6e" stroke-width="1.8" fill="none"/><circle cx="2.5" cy="16.5" r="2" fill="#6e6e6e"/><circle cx="13.5" cy="3" r="2" fill="#6e6e6e"/><path d="M13 11 L19 17 M19 11 L13 17" stroke="#e05555" stroke-width="1.8"/></svg>
<svg style="left:923px;top:186px" width="20" height="20"><path d="M1 18 L12 7" stroke="#6e6e6e" stroke-width="2.6"/><path d="M14 1 V5 M17 3 L15 5 M19 7 H15 M11 3 L13 5" stroke="#3d8fd4" stroke-width="1.4"/></svg>
<div class="vl" style="left:953px;top:187px;height:20px;background:#d0d0d0"></div>
<svg style="left:965px;top:186px" width="22" height="21"><path d="M3 1 V8 M0.5 4 L3 1 L5.5 4 M3 19 V12 M0.5 16 L3 19 L5.5 16" stroke="#6e6e6e" stroke-width="1.5" fill="none"/><rect x="9" y="1" width="9" height="4" stroke="#6e6e6e" stroke-width="1.5" fill="none"/><rect x="9" y="8" width="9" height="4" stroke="#6e6e6e" stroke-width="1.5" fill="none"/><rect x="9" y="15" width="9" height="4" stroke="#6e6e6e" stroke-width="1.5" fill="none"/><path d="M15 17 H22 L18.5 21 Z" fill="#333"/></svg>
<svg style="left:997px;top:186px" width="22" height="21"><path d="M1 1 V19" stroke="#3d8fd4" stroke-width="1.6"/><rect x="4" y="5" width="8" height="4" fill="#6e6e6e"/><rect x="4" y="12" width="13" height="4" fill="#6e6e6e"/><path d="M15 17 H22 L18.5 21 Z" fill="#333"/></svg>
<svg style="left:1032px;top:186px" width="22" height="21"><path d="M2 1.5 H14 M2 17.5 H14 M8 1.5 V17.5" stroke="#6e6e6e" stroke-width="2"/><path d="M6 7 H10 M6 12 H10" stroke="#6e6e6e" stroke-width="1.2"/><path d="M13 17 H20 L16.5 21 Z" fill="#333"/></svg>
<svg style="left:1516px;top:188px" width="16" height="16"><circle cx="8" cy="8" r="8" fill="#6b6b6b"/><path d="M5.3 6 A2.7 2.7 0 1 1 8 8.7 V10" stroke="#fff" stroke-width="1.7" fill="none"/><circle cx="8" cy="12.6" r="1.1" fill="#fff"/></svg>

<!--/TABS-->
<!-- ===== ATTRIBUTES ===== -->
<div class="a" style="left:1544px;top:179px;width:348px;height:766px;background:#fff"></div>

<!--ATTR-->
<!-- ===== ATTRIBUTES PANEL ===== -->
<span class="t" style="left:1550px;top:155px;font-size:14.2px;color:#1a1a1a">Attributes</span>
<svg style="left:1802px;top:152px" width="18" height="17"><circle cx="7" cy="7" r="5.7" stroke="#555" stroke-width="2" fill="none"/><path d="M11 11 L17 17" stroke="#555" stroke-width="2.4"/></svg>
<svg style="left:1835px;top:152px" width="17" height="17"><circle cx="8.5" cy="8.5" r="6.6" stroke="#555" stroke-width="3.4" fill="none" stroke-dasharray="2.6 2.58" transform="rotate(-10 8.5 8.5)"/><circle cx="8.5" cy="8.5" r="5.6" fill="#555"/><circle cx="8.5" cy="8.5" r="2.2" fill="#f2f2f2"/></svg>
<div class="a" style="left:1868px;top:159px;width:15px;height:2px;background:#555"></div>
<div class="hl" style="left:1544px;top:178px;width:348px;background:#c9c9c9"></div>
<svg style="left:1552px;top:186px" width="18" height="16"><text x="0" y="10" font-family="Liberation Sans" font-size="11" fill="#9aa0a6">Ab</text><rect x="0" y="13" width="18" height="2" fill="#9aa0a6"/></svg>
<span class="t" style="left:1576px;top:188px;font-size:15px;color:#1a1a1a">emailEditText</span>
<span class="t" style="left:1831px;top:188px;font-size:15px;color:#b4b4b4">EditText</span>
<div class="hl" style="left:1544px;top:207px;width:348px;background:#d4d4d4"></div>
<span class="t" style="left:1554px;top:222px;font-size:15px;color:#1a1a1a">id</span>
<div class="a" style="left:1680px;top:218px;width:174px;height:23px;border:1px solid #c4c4c4;background:#fff"></div>
<span class="t" style="left:1684px;top:222px;font-size:15px;color:#1a1a1a">emailEditText</span>
<div class="a" style="left:1544px;top:249px;width:330px;height:30px;background:#f2f2f2;border-top:1px solid #d0d0d0;border-bottom:1px solid #d6d6d6"></div>
<svg style="left:1552px;top:259px" width="11" height="10"><path d="M0 0 H11 L5.5 9 Z" fill="#888"/></svg>
<span class="t" style="left:1569px;top:257px;font-size:15px;font-weight:bold;color:#111">Declared Attributes</span>
<svg style="left:1818px;top:256px" width="14" height="14"><path d="M7 0 V14 M0 7 H14" stroke="#555" stroke-width="2"/></svg>
<div class="a" style="left:1851px;top:262px;width:14px;height:2px;background:#555"></div>
<div class="vl" style="left:1676px;top:279px;height:515px;background:#e6e6e6"></div>
<div class="hl" style="left:1544px;top:309px;width:330px;background:#ececec"></div>
<span class="t" style="left:1560px;top:288px;font-size:14px;color:#1a1a1a">layout_width</span>
<span class="t" style="left:1689px;top:288px;font-size:14.7px;color:#1a1a1a">351dp</span>
<div class="vl" style="left:1825px;top:285px;height:19px;background:#c4c4c4"></div>
<svg style="left:1834px;top:292px" width="11" height="7"><path d="M0 0 H11 L5.5 6 Z" fill="#555"/></svg>
<div class="a" style="left:1860px;top:283px;width:8px;height:21px;border:1px solid #c8c8c8;border-radius:4px"></div>
<div class="hl" style="left:1544px;top:339px;width:330px;background:#ececec"></div>
<span class="t" style="left:1560px;top:318px;font-size:14px;color:#1a1a1a">layout_height</span>
<span class="t" style="left:1689px;top:318px;font-size:14.7px;color:#1a1a1a">71dp</span>
<div class="vl" style="left:1825px;top:315px;height:19px;background:#c4c4c4"></div>
<svg style="left:1834px;top:322px" width="11" height="7"><path d="M0 0 H11 L5.5 6 Z" fill="#555"/></svg>
<div class="a" style="left:1860px;top:313px;width:8px;height:21px;border:1px solid #c8c8c8;border-radius:4px"></div>
<div class="hl" style="left:1544px;top:369px;width:330px;background:#ececec"></div>
<span class="t" style="left:1560px;top:348px;font-size:14px;color:#1a1a1a;transform:scaleX(0.965);transform-origin:0 0">layout_constraint...</span>
<span class="t" style="left:1689px;top:348px;font-size:14.7px;color:#1a1a1a">@+id/editTextTextI</span>
<div class="vl" style="left:1825px;top:345px;height:19px;background:#c4c4c4"></div>
<svg style="left:1834px;top:352px" width="11" height="7"><path d="M0 0 H11 L5.5 6 Z" fill="#555"/></svg>
<div class="a" style="left:1860px;top:343px;width:8px;height:21px;border:1px solid #c8c8c8;border-radius:4px"></div>
<div class="hl" style="left:1544px;top:399px;width:330px;background:#ececec"></div>
<span class="t" style="left:1560px;top:378px;font-size:14px;color:#1a1a1a;transform:scaleX(0.965);transform-origin:0 0">layout_constraint...</span>
<span class="t" style="left:1685px;top:378px;font-size:14.7px;color:#1a1a1a">0.5</span>
<div class="a" style="left:1860px;top:373px;width:8px;height:21px;border:1px solid #c8c8c8;border-radius:4px"></div>
<div class="hl" style="left:1544px;top:429px;width:330px;background:#ececec"></div>
<span class="t" style="left:1560px;top:408px;font-size:14px;color:#1a1a1a;transform:scaleX(0.965);transform-origin:0 0">layout_constraint...</span>
<span class="t" style="left:1689px;top:408px;font-size:14.7px;color:#1a1a1a">@+id/textView</span>
<div class="vl" style="left:1825px;top:405px;height:19px;background:#c4c4c4"></div>
<svg style="left:1834px;top:412px" width="11" height="7"><path d="M0 0 H11 L5.5 6 Z" fill="#555"/></svg>
<div class="a" style="left:1860px;top:403px;width:8px;height:21px;border:1px solid #c8c8c8;border-radius:4px"></div>
<div class="hl" style="left:1544px;top:459px;width:330px;background:#ececec"></div>
<span class="t" style="left:1560px;top:438px;font-size:14px;color:#1a1a1a;transform:scaleX(0.965);transform-origin:0 0">layout_constraint...</span>
<span class="t" style="left:1689px;top:438px;font-size:14.7px;color:#1a1a1a">parent</span>
<div class="vl" style="left:1825px;top:435px;height:19px;background:#c4c4c4"></div>
<svg style="left:1834px;top:442px" width="11" height="7"><path d="M0 0 H11 L5.5 6 Z" fill="#555"/></svg>
<div class="a" style="left:1860px;top:433px;width:8px;height:21px;border:1px solid #c8c8c8;border-radius:4px"></div>
<div class="hl" style="left:1544px;top:489px;width:330px;background:#ececec"></div>
<span class="t" style="left:1560px;top:468px;font-size:14px;color:#1a1a1a;transform:scaleX(0.965);transform-origin:0 0">layout_constraint...</span>
<span class="t" style="left:1689px;top:468px;font-size:14.7px;color:#1a1a1a">parent</span>
<div class="vl" style="left:1825px;top:465px;height:19px;background:#c4c4c4"></div>
<svg style="left:1834px;top:472px" width="11" height="7"><path d="M0 0 H11 L5.5 6 Z" fill="#555"/></svg>
<div class="a" style="left:1860px;top:463px;width:8px;height:21px;border:1px solid #c8c8c8;border-radius:4px"></div>
<div class="hl" style="left:1544px;top:519px;width:330px;background:#ececec"></div>
<span class="t" style="left:1560px;top:498px;font-size:14px;color:#1a1a1a">layout_marginTop</span>
<span class="t" style="left:1685px;top:498px;font-size:14.7px;color:#1a1a1a">48dp</span>
<div class="a" style="left:1860px;top:493px;width:8px;height:21px;border:1px solid #c8c8c8;border-radius:4px"></div>
<div class="hl" style="left:1544px;top:549px;width:330px;background:#ececec"></div>
<span class="t" style="left:1560px;top:528px;font-size:14px;color:#1a1a1a;transform:scaleX(0.975);transform-origin:0 0">layout_marginBo...</span>
<span class="t" style="left:1685px;top:528px;font-size:14.7px;color:#1a1a1a">37dp</span>
<div class="a" style="left:1860px;top:523px;width:8px;height:21px;border:1px solid #c8c8c8;border-radius:4px"></div>
<div class="hl" style="left:1544px;top:579px;width:330px;background:#ececec"></div>
<span class="t" style="left:1560px;top:558px;font-size:14px;color:#1a1a1a">ems</span>
<span class="t" style="left:1685px;top:558px;font-size:14.7px;color:#1a1a1a">10</span>
<div class="a" style="left:1860px;top:553px;width:8px;height:21px;border:1px solid #c8c8c8;border-radius:4px"></div>
<div class="hl" style="left:1544px;top:609px;width:330px;background:#ececec"></div>
<span class="t" style="left:1560px;top:588px;font-size:14px;color:#1a1a1a">hint</span>
<div class="a" style="left:1678px;top:581px;width:178px;height:27px;border:2px solid #e5a64a;background:#fff"></div>
<span class="t" style="left:1686px;top:588px;font-size:14.7px;color:#1a1a1a">Email id</span>
<div class="a" style="left:1860px;top:583px;width:8px;height:21px;border:1px solid #c8c8c8;border-radius:4px"></div>
<div class="hl" style="left:1544px;top:639px;width:330px;background:#ececec"></div>
<span class="t" style="left:1560px;top:618px;font-size:14px;color:#1a1a1a">id</span>
<span class="t" style="left:1685px;top:618px;font-size:14.7px;color:#1a1a1a">emailEditText</span>
<div class="hl" style="left:1544px;top:669px;width:330px;background:#ececec"></div>
<svg style="left:1546px;top:651px" width="10" height="11"><path d="M0 0 L9 5.5 L0 11 Z" fill="#999"/></svg>
<span class="t" style="left:1560px;top:648px;font-size:14px;color:#1a1a1a">inputType</span>
<svg style="left:1686px;top:647px" width="11" height="15"><path d="M1 0 V15" stroke="#7a7a7a" stroke-width="1.6"/><path d="M1.5 1 H10 L8 4.5 L10 8 H1.5 Z" fill="#7a7a7a"/></svg>
<span class="t" style="left:1705px;top:648px;font-size:14.7px;color:#1a1a1a">textEmailAddress</span>
<div class="a" style="left:1860px;top:643px;width:8px;height:21px;border:1px solid #c8c8c8;border-radius:4px"></div>
<div class="hl" style="left:1544px;top:699px;width:330px;background:#ececec"></div>
<span class="t" style="left:1560px;top:678px;font-size:14px;color:#1a1a1a">textColor</span>
<div class="a" style="left:1684px;top:674px;width:20px;height:20px;background:#000000"></div>
<span class="t" style="left:1708px;top:678px;font-size:14.7px;color:#1a1a1a">#000000</span>
<div class="a" style="left:1860px;top:673px;width:8px;height:21px;border:1px solid #c8c8c8;border-radius:4px"></div>
<div class="hl" style="left:1544px;top:729px;width:330px;background:#ececec"></div>
<span class="t" style="left:1560px;top:708px;font-size:14px;color:#1a1a1a">textColorHint</span>
<div class="a" style="left:1684px;top:704px;width:20px;height:20px;background:#686868"></div>
<span class="t" style="left:1708px;top:708px;font-size:14.7px;color:#1a1a1a">#686868</span>
<div class="a" style="left:1860px;top:703px;width:8px;height:21px;border:1px solid #c8c8c8;border-radius:4px"></div>
<div class="hl" style="left:1544px;top:759px;width:330px;background:#ececec"></div>
<span class="t" style="left:1560px;top:738px;font-size:14px;color:#1a1a1a">textColorLink</span>
<span class="t" style="left:1708px;top:738px;font-size:14.7px;color:#1a1a1a">#FFFFFF</span>
<div class="a" style="left:1860px;top:733px;width:8px;height:21px;border:1px solid #c8c8c8;border-radius:4px"></div>
<div class="hl" style="left:1544px;top:789px;width:330px;background:#ececec"></div>
<span class="t" style="left:1560px;top:768px;font-size:14px;color:#1a1a1a">textSize</span>
<span class="t" style="left:1689px;top:768px;font-size:14.7px;color:#1a1a1a">30sp</span>
<div class="vl" style="left:1825px;top:765px;height:19px;background:#c4c4c4"></div>
<svg style="left:1834px;top:772px" width="11" height="7"><path d="M0 0 H11 L5.5 6 Z" fill="#555"/></svg>
<div class="a" style="left:1860px;top:763px;width:8px;height:21px;border:1px solid #c8c8c8;border-radius:4px"></div>
<div class="a" style="left:1544px;top:794px;width:330px;height:31px;background:#f2f2f2;border-top:1px solid #d0d0d0;border-bottom:1px solid #d6d6d6"></div>
<svg style="left:1552px;top:804px" width="11" height="10"><path d="M0 0 H11 L5.5 9 Z" fill="#888"/></svg>
<span class="t" style="left:1569px;top:803px;font-size:15px;font-weight:bold;color:#111">Layout</span>
<span class="t" style="left:1554px;top:838px;font-size:15px;color:#1a1a1a">Constraint Widget</span>
<div class="a" style="left:1668px;top:882px;width:81px;height:29px;background:#efefef"></div>
<div class="a" style="left:1672px;top:886px;width:74px;height:23px;border:1px solid #c4c4c4;border-radius:3px;background:#fff"></div>
<div class="vl" style="left:1718px;top:887px;height:21px;background:#c4c4c4"></div>
<span class="t" style="left:1679px;top:890px;font-size:15px;color:#1a1a1a">48</span>
<svg style="left:1727px;top:895px" width="11" height="7"><path d="M0 0 H11 L5.5 6 Z" fill="#555"/></svg>
<div class="a" style="left:1707px;top:911px;width:2px;height:12px;background:#888"></div>
<div class="a" style="left:1671px;top:927px;width:76px;height:20px;border:1px solid #888;border-bottom:none"></div>
<div class="a" style="left:1702px;top:921px;width:13px;height:13px;border-radius:50%;background:#888"></div>
<div class="a" style="left:1707px;top:938px;width:1px;height:7px;background:#888"></div>
<div class="a" style="left:1560px;top:901px;width:6px;height:44px;border-radius:3px 3px 0 0;background:#cbcbcb"></div>
<!-- scrollbar -->
<div class="a" style="left:1881px;top:209px;width:10px;height:78px;background:#e0e0e0"></div>

<!--/ATTR-->
<!-- ===== RIGHT STRIP ===== -->
<div class="vl" style="left:1892px;top:72px;height:903px"></div>

<!-- ===== BOTTOM ===== -->
<div class="hl" style="left:447px;top:945px;width:1445px;background:#dcdcdc"></div>
<div class="hl" style="left:0;top:975px;width:1920px"></div>
<div class="hl" style="left:0;top:1004px;width:1920px;background:#c0c0c0"></div>

<!--CT-->
<!-- ===== COMPONENT TREE VISIBLE BITS ===== -->
<div class="a" style="left:678px;top:106px;width:78px;height:839px;background:#fff"></div>
<div class="a" style="left:678px;top:106px;width:78px;height:36px;background:#f2f2f2"></div>
<div class="hl" style="left:678px;top:141px;width:78px"></div>
<div class="hl" style="left:678px;top:177px;width:78px"></div>
<svg style="left:672px;top:151px" width="16" height="16"><circle cx="6" cy="6" r="4.8" stroke="#777" stroke-width="1.8" fill="none"/><path d="M9.5 9.5 L14 14" stroke="#777" stroke-width="2.2"/></svg>
<div class="a" style="left:678px;top:180px;width:78px;height:24px;background:#d5d5d5"></div>
<div class="a" style="left:751px;top:180px;width:5px;height:24px;background:#c8c8c8"></div>
<div class="hl" style="left:678px;top:540px;width:78px"></div>
<div class="a" style="left:678px;top:541px;width:78px;height:9px;background:#f2f2f2"></div>
<div class="hl" style="left:678px;top:550px;width:78px"></div>
<div class="a" style="left:678px;top:551px;width:78px;height:34px;background:#f2f2f2"></div>
<div class="hl" style="left:678px;top:585px;width:78px"></div>
<div class="a" style="left:678px;top:637px;width:78px;height:24px;background:#d5d5d5"></div>
<span class="t" style="left:672px;top:668px;font-size:14px;color:#8c8c8c">ssword)</span>
<svg style="left:731px;top:617px" width="18" height="16"><path d="M9 0.5 L17.5 15.5 H0.5 Z" fill="#e5a92e"/><path d="M9 5 V10.5" stroke="#fff" stroke-width="2"/><circle cx="9" cy="13" r="1.1" fill="#fff"/></svg>
<svg style="left:731px;top:642px" width="18" height="16"><path d="M9 0.5 L17.5 15.5 H0.5 Z" fill="#e5a92e"/><path d="M9 5 V10.5" stroke="#fff" stroke-width="2"/><circle cx="9" cy="13" r="1.1" fill="#fff"/></svg>
<svg style="left:731px;top:667px" width="18" height="16"><path d="M9 0.5 L17.5 15.5 H0.5 Z" fill="#e5a92e"/><path d="M9 5 V10.5" stroke="#fff" stroke-width="2"/><circle cx="9" cy="13" r="1.1" fill="#fff"/></svg>
<svg style="left:731px;top:692px" width="18" height="16"><path d="M9 0.5 L17.5 15.5 H0.5 Z" fill="#e5a92e"/><path d="M9 5 V10.5" stroke="#fff" stroke-width="2"/><circle cx="9" cy="13" r="1.1" fill="#fff"/></svg>
<svg style="left:731px;top:717px" width="18" height="16"><path d="M9 0.5 L17.5 15.5 H0.5 Z" fill="#e5a92e"/><path d="M9 5 V10.5" stroke="#fff" stroke-width="2"/><circle cx="9" cy="13" r="1.1" fill="#fff"/></svg>
<svg style="left:731px;top:742px" width="18" height="16"><path d="M9 0.5 L17.5 15.5 H0.5 Z" fill="#e5a92e"/><path d="M9 5 V10.5" stroke="#fff" stroke-width="2"/><circle cx="9" cy="13" r="1.1" fill="#fff"/></svg>



<!--/CT-->
<!--PHONE-->
<!-- ===== PHONE ===== -->
<div class="a" style="left:258px;top:44px;width:419px;height:863px;border-radius:44px;background:#262626;border-top:3px solid #444;border-bottom:2px solid #333"></div>
<div class="a" style="left:266px;top:51px;width:403px;height:848px;border-radius:37px;background:#0a0a0a"></div>
<div class="a" style="left:266px;top:51px;width:403px;height:848px;border-radius:37px;border:1px solid transparent;border-left-color:#8f8f8f;border-right-color:#8f8f8f"></div>
<div class="a" style="left:270px;top:55px;width:395px;height:840px;border-radius:33px;border:1px solid transparent;border-left-color:#9a9a9a;border-right-color:#9a9a9a"></div>
<div class="a" style="left:275px;top:63px;width:384px;height:788px;border-radius:26px 26px 16px 16px;background:#000;overflow:hidden">
  <div class="a" style="left:0;top:0;width:384px;height:22px;background:#3700b3"></div>
  <div class="a" style="left:0;top:22px;width:384px;height:52px;background:#6200ee"></div>
  <div class="a" style="left:0;top:74px;width:384px;height:670px;background:#fafafa"></div>
  <div class="a" style="left:0;top:74px;width:384px;height:3px;background:linear-gradient(#d6c4f0,#fafafa)"></div>
</div>
<!-- notch -->
<div class="a" style="left:398px;top:55px;width:138px;height:52px;border-radius:0 0 22px 22px;background:#080808"></div>
<div class="a" style="left:386px;top:63px;width:12px;height:12px;background:#080808"><div class="a" style="left:0;top:0;width:12px;height:12px;background:#3700b3;border-top-right-radius:12px"></div></div>
<div class="a" style="left:536px;top:63px;width:12px;height:12px;background:#080808"><div class="a" style="left:0;top:0;width:12px;height:12px;background:#3700b3;border-top-left-radius:12px"></div></div>
<div class="a" style="left:414px;top:75px;width:19px;height:19px;border-radius:50%;background:#1c1c1c;border:1px solid #2a2a2a"></div>
<div class="a" style="left:421px;top:82px;width:5px;height:5px;border-radius:50%;background:#4a4a4a"></div>
<div class="a" style="left:501px;top:75px;width:19px;height:19px;border-radius:50%;background:#1c1c1c;border:1px solid #2a2a2a"></div>
<div class="a" style="left:508px;top:82px;width:5px;height:5px;border-radius:50%;background:#4a4a4a"></div>
<div class="a" style="left:445px;top:89px;width:45px;height:4px;border-radius:2px;background:repeating-linear-gradient(90deg,#3a3a3a 0 2px,#222 2px 3px)"></div>
<!-- status bar -->
<div class="a" style="left:293px;top:68px;width:12px;height:12px;border-radius:50%;background:#8e6be8;border:1px solid #c8b8f6"></div>
<svg style="left:563px;top:68px" width="17" height="12"><path d="M0 2 Q8.5 -3 17 2 L8.5 12 Z" fill="#fff"/></svg>
<svg style="left:582px;top:68px" width="13" height="12"><path d="M13 0 V12 H0 Z" fill="#8e70e0"/><path d="M8 5 V12 H0 Z" fill="#fff"/></svg>
<div class="a" style="left:603px;top:68px;width:9px;height:12px;border-radius:1px;background:#fff"></div>
<div class="a" style="left:605px;top:66px;width:5px;height:2px;background:#fff"></div>
<span class="t" style="left:618px;top:67px;color:#fff;font-size:14px">9:51</span>
<span class="t" style="left:289px;top:103px;color:#fff;font-size:18.6px;font-weight:bold;transform:scaleX(0.947);transform-origin:0 0">Email and Password Authentication</span>
<!-- screen content -->
<span class="t" style="left:402px;top:179px;color:#6e6e6e;font-size:48px;font-weight:bold;transform:scaleX(0.915);transform-origin:0 0">Log In</span>
<span class="t" style="left:306px;top:316px;color:#6a6a6a;font-size:27.8px;transform:scaleX(0.98);transform-origin:0 0">Email id</span>
<div class="a" style="left:307px;top:352px;width:320px;height:2px;background:#8c8c8c"></div>
<span class="t" style="left:306px;top:417px;color:#9d9d9d;font-size:28px;transform:scaleX(1.0);transform-origin:0 0">Password</span>
<div class="a" style="left:307px;top:453px;width:320px;height:3px;background:#1fd0c6"></div>
<div class="a" style="left:427px;top:521px;width:80px;height:40px;border-radius:2px;background:#d6d7d7;box-shadow:0 1px 2px rgba(0,0,0,0.25)"></div>
<span class="t" style="left:446px;top:535px;color:#1e1e1e;font-size:14px;font-weight:bold;transform:scaleX(0.88);transform-origin:0 0">LOG IN</span>
<span class="t" style="left:414px;top:611px;color:#757575;font-size:23px;transform:scaleX(0.93);transform-origin:0 0">New User?</span>
<div class="a" style="left:429px;top:701px;width:75px;height:34px;border-radius:2px;background:#d6d7d7;box-shadow:0 1px 2px rgba(0,0,0,0.25)"></div>
<span class="t" style="left:441px;top:711px;color:#222;font-size:14.5px;transform:scaleX(0.87);transform-origin:0 0">SIGN UP</span>
<!-- nav bar -->
<svg style="left:355px;top:823px" width="12" height="13"><path d="M11 0 V13 L0 6.5 Z" fill="#9e9e9e"/></svg>
<div class="a" style="left:460px;top:823px;width:13px;height:13px;border-radius:50%;background:#9e9e9e"></div>
<div class="a" style="left:567px;top:824px;width:12px;height:11px;background:#9e9e9e"></div>
<div class="a" style="left:406px;top:877px;width:122px;height:7px;border-radius:3px;background:repeating-linear-gradient(90deg,#2c2c2c 0 3px,#1e1e1e 3px 4px)"></div>

<!--/PHONE-->
<!--EMU-->
<!-- ===== EMULATOR SIDE TOOLBAR ===== -->
<div class="a" style="left:677px;top:244px;width:4px;height:54px;background:#1a1a1a;border-radius:0 2px 2px 0"></div>
<div class="a" style="left:677px;top:353px;width:4px;height:109px;background:#3a3a3a;border-radius:0 2px 2px 0;border-right:1px solid #777"></div>
<div class="a" style="left:684px;top:44px;width:67px;height:531px;background:#efefef;border:1px solid #0a0a0a"></div>
<div class="a" style="left:698px;top:62px;width:10px;height:1px;background:#999"></div>
<svg style="left:726px;top:57px" width="10" height="10"><path d="M1 1 L9 9 M9 1 L1 9" stroke="#6b7b84" stroke-width="1.3"/></svg>
<g></g>
<!-- power -->
<svg style="left:707px;top:86px" width="20" height="20"><path d="M5.5 5 A7.5 7.5 0 1 0 14.5 5" stroke="#5f7b88" stroke-width="2.2" fill="none"/><path d="M10 1 V10" stroke="#5f7b88" stroke-width="2.2"/></svg>
<!-- vol up -->
<svg style="left:707px;top:131px" width="20" height="20"><path d="M1 6.5 H5 L10.5 1.5 V18.5 L5 13.5 H1 Z" fill="#5f7b88"/><path d="M13 5 A6 6 0 0 1 13 15" stroke="#5f7b88" stroke-width="2" fill="none"/></svg>
<!-- vol down -->
<svg style="left:707px;top:177px" width="20" height="20"><path d="M3 6.5 H7 L12 2 V18 L7 13.5 H3 Z" fill="#5f7b88"/><path d="M14 7.5 A3 3 0 0 1 14 12.5" stroke="#5f7b88" stroke-width="2" fill="none"/></svg>
<!-- rotate left -->
<svg style="left:703px;top:218px" width="30" height="30"><rect x="9.5" y="5" width="11" height="18" rx="1.5" transform="rotate(-45 15 14)" stroke="#5f7b88" stroke-width="2.8" fill="none"/><path d="M15 3.5 A11 11 0 0 1 25.5 14" stroke="#5f7b88" stroke-width="1.6" fill="none"/></svg>
<!-- rotate right -->
<svg style="left:703px;top:263px" width="30" height="30"><rect x="9.5" y="6" width="11" height="18" rx="1.5" transform="rotate(45 15 15)" stroke="#5f7b88" stroke-width="2.8" fill="none"/><path d="M2.5 12 A11 11 0 0 1 14 3" stroke="#5f7b88" stroke-width="1.6" fill="none"/></svg>
<!-- camera -->
<svg style="left:707px;top:311px" width="20" height="19"><path d="M1 5 H5 L7 2 H13 L15 5 H19 V17 H1 Z" fill="#5f7b88"/><circle cx="10" cy="11" r="3.8" fill="#efefef"/><circle cx="10" cy="11" r="2.2" fill="#5f7b88"/></svg>
<!-- zoom -->
<svg style="left:707px;top:356px" width="20" height="20"><circle cx="8" cy="8" r="6.5" stroke="#5f7b88" stroke-width="1.8" fill="none"/><path d="M8 5 V11 M5 8 H11" stroke="#5f7b88" stroke-width="1.5"/><path d="M12.5 12.5 L18.5 18.5" stroke="#5f7b88" stroke-width="2.4"/></svg>
<!-- back -->
<svg style="left:709px;top:403px" width="16" height="18"><path d="M14 2 V16 L2 9 Z" stroke="#5f7b88" stroke-width="1.9" fill="none" stroke-linejoin="round"/></svg>
<!-- home -->
<div class="a" style="left:709px;top:449px;width:16px;height:16px;border-radius:50%;border:2px solid #5f7b88"></div>
<!-- overview -->
<div class="a" style="left:710px;top:495px;width:14px;height:14px;border-radius:1px;border:1.8px solid #5f7b88"></div>
<!-- more -->
<div class="a" style="left:709px;top:545px;width:4px;height:4px;border-radius:50%;background:#5f7b88;box-shadow:6px 0 0 #5f7b88,12px 0 0 #5f7b88"></div>

<!--/EMU-->
<!-- ===== TASKBAR ===== -->
<div class="a" style="left:0;top:1028px;width:1920px;height:1px;background:#1a1a1a;z-index:1"></div>
<div class="a" style="left:0;top:1028px;width:1920px;height:52px;background:linear-gradient(90deg,#2a3b3c 0%,#2d3a3a 25%,#3a3430 30%,#2f3d3d 40%,#2b3a3d 65%,#2c3a40 70%,#4b3a2e 78%,#2e3e3e 84%,#2c3b3c 100%)"></div>


<!--BOTTOM-->
<!-- ===== LEFT STRIP CONTENT ===== -->
<span class="t" style="left:9px;top:200px;font-size:13.3px;color:#1a1a1a;transform:rotate(-90deg);transform-origin:0 0">Resource Manager</span>
<svg style="left:7px;top:207px" width="15" height="13"><path d="M4 0 L8 6 H0 Z" fill="#6e6e6e"/><rect x="0" y="7" width="6" height="6" fill="#6e6e6e"/><circle cx="11" cy="10" r="3.5" fill="#6e6e6e"/></svg>
<div class="a" style="left:0;top:238px;width:28px;height:103px;background:#d0d0d0"></div>
<span class="t" style="left:9px;top:308px;font-size:13.6px;color:#1a1a1a;transform:rotate(-90deg);transform-origin:0 0"><u>1</u>: Project</span>
<svg style="left:7px;top:315px" width="15" height="12"><path d="M0 0 H5 L7 2 H14 V11 H0 Z" fill="#6e6e6e"/></svg>
<span class="t" style="left:9px;top:698px;font-size:13.2px;color:#1a1a1a;transform:rotate(-90deg);transform-origin:0 0">Build Variants</span>
<svg style="left:7px;top:705px" width="15" height="11" viewBox="0 0 21 15"><path d="M0.5 14 A10 10 0 0 1 20.5 14 Z" fill="#6e6e6e"/><path d="M4 1 L6.5 5 M17 1 L14.5 5" stroke="#6e6e6e" stroke-width="1.8"/></svg>
<span class="t" style="left:9px;top:818px;font-size:13.2px;color:#1a1a1a;transform:rotate(-90deg);transform-origin:0 0"><u>2</u>: Favorites</span>
<svg style="left:7px;top:824px" width="15" height="14"><path d="M7.5 0 L9.4 5 L15 5.3 L10.6 8.7 L12.1 14 L7.5 11 L2.9 14 L4.4 8.7 L0 5.3 L5.6 5 Z" fill="#6e6e6e"/></svg>
<span class="t" style="left:9px;top:939px;font-size:13.2px;color:#1a1a1a;transform:rotate(-90deg);transform-origin:0 0"><u>7</u>: Structure</span>
<svg style="left:8px;top:945px" width="14" height="12"><rect x="8" y="0" width="5" height="5" fill="#6e6e6e"/><rect x="0" y="6" width="5" height="5" fill="#6e6e6e"/><rect x="7" y="6" width="5" height="5" fill="#6e6e6e"/></svg>

<!-- ===== RIGHT STRIP CONTENT ===== -->
<div class="a" style="left:1893px;top:72px;width:27px;height:903px;background:#f2f2f2"></div>
<svg style="left:1899px;top:84px" width="16" height="14"><path d="M0.5 13 C0 8 3 5 7 5 C9 5 10 5.5 11 5 C11.5 2.5 13 1.5 14.5 2 C16 2.5 16.5 4 15.2 5 C14.5 4.2 13.5 4.4 13.2 5.5 C13.2 8 12.8 10 12 11.5 L11 13 H9 L8.5 11 H5 L4.2 13 Z" fill="#6e6e6e"/></svg>
<span class="t" style="left:1915px;top:105px;font-size:13.6px;color:#1a1a1a;transform:rotate(90deg);transform-origin:0 0">Gradle</span>
<svg style="left:1900px;top:172px" width="15" height="16"><rect x="1" y="1" width="9" height="11" rx="1" stroke="#6e6e6e" stroke-width="1.6" fill="none"/><rect x="6" y="5" width="8" height="10" rx="1" fill="#6e6e6e"/><rect x="8" y="7" width="4" height="5" fill="#f2f2f2"/></svg>
<span class="t" style="left:1915px;top:194px;font-size:13.6px;color:#1a1a1a;transform:rotate(90deg);transform-origin:0 0">Layout Validation</span>
<svg style="left:1901px;top:820px" width="12" height="16"><rect x="1" y="1" width="10" height="14" rx="1.5" stroke="#6e6e6e" stroke-width="1.8" fill="none"/><path d="M4 12.5 H8" stroke="#6e6e6e" stroke-width="1.2"/></svg>
<span class="t" style="left:1915px;top:841px;font-size:13px;color:#1a1a1a;transform:rotate(90deg);transform-origin:0 0">Device File Explorer</span>

<!-- ===== BOTTOM TOOL BAR ===== -->
<div class="a" style="left:0;top:976px;width:1920px;height:26px;background:#f2f2f2"></div>
<div class="hl" style="left:0;top:974px;width:1920px;background:#c9c9c9"></div>
<svg style="left:42px;top:983px" width="15" height="14"><rect x="0" y="0" width="15" height="14" fill="#6e6e6e"/><path d="M3 3.5 L7 7 L3 10.5" stroke="#f2f2f2" stroke-width="1.6" fill="none"/><path d="M8 11 H12" stroke="#f2f2f2" stroke-width="1.4"/></svg>
<span class="t" style="left:63px;top:985px;font-size:13.8px;color:#1a1a1a;letter-spacing:0.2px">Terminal</span>
<svg style="left:139px;top:982px" width="16" height="16"><path d="M1 5 L5 1 L10 5 L8 7 Z" fill="#6e6e6e"/><path d="M6 6 L15 15" stroke="#6e6e6e" stroke-width="2.4"/></svg>
<span class="t" style="left:160px;top:985px;font-size:13.8px;color:#1a1a1a;letter-spacing:0.2px">Build</span>
<svg style="left:216px;top:984px" width="14" height="13"><path d="M0 1 H14 M0 4.5 H10 M0 8 H12 M0 11.5 H8" stroke="#6e6e6e" stroke-width="1.6"/></svg>
<span class="t" style="left:236px;top:985px;font-size:13.8px;color:#1a1a1a;letter-spacing:0.2px"><u>6</u>: Logcat</span>
<svg style="left:318px;top:984px" width="18" height="13"><path d="M2 12 A7.5 7.5 0 0 1 14 4" stroke="#6e6e6e" stroke-width="2.2" fill="none"/><path d="M15.5 5 A7.5 7.5 0 0 1 16.5 12" stroke="#6e6e6e" stroke-width="2.2" fill="none"/><path d="M7 12 L13 5 L10 12 Z" fill="#6e6e6e"/></svg>
<span class="t" style="left:340px;top:985px;font-size:13.8px;color:#1a1a1a;letter-spacing:0.2px">Profiler</span>
<svg style="left:408px;top:983px" width="16" height="16"><path d="M0 0 L12 7 L0 14 Z" fill="#6e6e6e"/><circle cx="12" cy="12" r="3" fill="#59a869"/></svg>
<span class="t" style="left:428px;top:985px;font-size:13.8px;color:#1a1a1a;letter-spacing:0.2px"><u>4</u>: Run</span>
<svg style="left:492px;top:983px" width="14" height="14"><path d="M0 1.5 H2.5 M0 5.5 H2.5 M0 9.5 H2.5 M0 13 H2.5 M4 1.5 H14 M4 5.5 H14 M4 9.5 H14 M4 13 H14" stroke="#6e6e6e" stroke-width="1.6"/></svg>
<span class="t" style="left:511px;top:985px;font-size:13.8px;color:#1a1a1a;letter-spacing:0.2px">TODO</span>
<svg style="left:1644px;top:982px" width="16" height="17"><circle cx="8" cy="8.5" r="8" fill="#4aa35a"/><text x="4.2" y="13" font-family="Liberation Sans" font-size="11.5" font-weight="bold" fill="#fff">4</text></svg>
<span class="t" style="left:1666px;top:985px;font-size:13.8px;color:#1a1a1a;letter-spacing:0.15px">Event Log</span>
<svg style="left:1755px;top:982px" width="17" height="17"><rect x="0.8" y="0.8" width="11" height="9" stroke="#6e6e6e" stroke-width="1.4" fill="none"/><rect x="3" y="3" width="11" height="9" stroke="#6e6e6e" stroke-width="1.4" fill="#f2f2f2"/><circle cx="10" cy="10" r="3" stroke="#6e6e6e" stroke-width="1.4" fill="#f2f2f2"/><path d="M12 12 L15.5 15.5" stroke="#6e6e6e" stroke-width="1.8"/></svg>
<span class="t" style="left:1776px;top:985px;font-size:13.8px;color:#1a1a1a;letter-spacing:0.05px">Layout Inspector</span>

<!-- ===== TOAST ===== -->
<div class="a" style="left:286px;top:936px;width:297px;height:39px;border-radius:3px;background:#c5ebc5;border:1px solid #a7d7a7"></div>
<svg style="left:426px;top:974px" width="20" height="12"><path d="M0 0 L10 10 L20 0 Z" fill="#c5ebc5"/><path d="M0 0.5 L10 10.5 L20 0.5" stroke="#a7d7a7" stroke-width="1" fill="none"/></svg>
<span class="t" style="left:301px;top:949px;font-size:14.4px;color:#1e1e1e">Install successfully finished in 1 s 449 ms.</span>

<!-- ===== STATUS BAR ===== -->
<div class="a" style="left:0;top:1002px;width:1920px;height:2px;background:#c0c0c0"></div>
<div class="a" style="left:0;top:1004px;width:1920px;height:25px;background:#f2f2f2"></div>
<svg style="left:8px;top:1009px" width="15" height="15"><rect x="3.5" y="0.5" width="11" height="11" stroke="#777" stroke-width="1" fill="none"/><path d="M0.5 3.5 V14.5 H11.5" stroke="#777" stroke-width="1" fill="none"/></svg>
<span class="t" style="left:34px;top:1010px;font-size:14.6px;color:#1a1a1a">Install successfully finished in 1 s 449 ms. (a minute ago)</span>
<span class="t" style="left:1646px;top:1010px;font-size:14.6px;color:#1a1a1a">20:1</span>
<span class="t" style="left:1689px;top:1010px;font-size:14.6px;color:#1a1a1a">CRLF</span>
<span class="t" style="left:1736px;top:1010px;font-size:14.6px;color:#9a9a9a">UTF-8</span>
<span class="t" style="left:1790px;top:1010px;font-size:14.3px;color:#1a1a1a">4 spaces</span>
<svg style="left:1860px;top:1008px" width="15" height="14"><path d="M2 6 V3.5 A3 3 0 0 1 8 3.5" stroke="#6e6e6e" stroke-width="1.6" fill="none"/><rect x="5" y="6" width="10" height="8" fill="#6e6e6e"/></svg>
<svg style="left:1891px;top:1008px" width="16" height="15"><path d="M3 5 L4 1 H12 L13 5 Z" fill="#6e6e6e"/><path d="M0 5.5 H16" stroke="#6e6e6e" stroke-width="1.5"/><circle cx="8" cy="10" r="4.3" stroke="#6e6e6e" stroke-width="1.4" fill="none"/><path d="M4 15 H12" stroke="#6e6e6e" stroke-width="1.5"/></svg>

<!-- ===== TASKBAR CONTENT ===== -->
<svg style="left:20px;top:1046px" width="20" height="20"><path d="M0 2.8 L8.3 1.6 V9.5 H0 Z M9.3 1.5 L20 0 V9.5 H9.3 Z M0 10.5 H8.3 V18.4 L0 17.2 Z M9.3 10.5 H20 V20 L9.3 18.5 Z" fill="#fff"/></svg>
<div class="a" style="left:60px;top:1029px;width:430px;height:51px;background:#f0f0f0;border:1px solid #c4c4c4;border-right:none;border-bottom:none"></div>
<svg style="left:75px;top:1045px" width="22" height="21"><circle cx="13" cy="8" r="7" stroke="#222" stroke-width="1.6" fill="none"/><path d="M8 13 L1 20" stroke="#222" stroke-width="2"/></svg>
<span class="t" style="left:110px;top:1047px;font-size:18.6px;color:#333">Type here to search</span>
<div class="a" style="left:510px;top:1045px;width:19px;height:19px;border-radius:50%;border:2.2px solid #fff"></div>
<svg style="left:570px;top:1045px" width="21" height="20"><rect x="1" y="3" width="12" height="13" stroke="#fff" stroke-width="1.5" fill="none"/><path d="M1 0.7 H13 M1 18.5 H13 M17 0 V6 M17 8 V12 M17 14 V20" stroke="#fff" stroke-width="1.5"/></svg>
<svg style="left:632px;top:1043px" width="24" height="24"><defs><linearGradient id="p3" x1="0" y1="0" x2="0.4" y2="1"><stop offset="0" stop-color="#f9a8e8"/><stop offset="0.45" stop-color="#c890f0"/><stop offset="1" stop-color="#48c8f0"/></linearGradient></defs><circle cx="12" cy="12" r="11.5" fill="url(#p3)"/><path d="M3 9 Q8 4 14 5" stroke="#fff" stroke-width="2" fill="none" opacity="0.8"/><path d="M21 3 L12 13" stroke="#333" stroke-width="2.6"/><path d="M12 13 Q9 15 10 18 Q13 17 13.5 14 Z" fill="#f0f0f0"/></svg>
<svg style="left:691px;top:1042px" width="29" height="26"><path d="M0 2 H11 L13 5 H29 V26 H0 Z" fill="#f3c34a"/><rect x="0" y="8" width="29" height="18" fill="#fdd96a"/><rect x="8" y="15" width="13" height="9" fill="#3a8bd8"/><rect x="11" y="18" width="7" height="6" fill="#fdd96a"/></svg>
<div class="a" style="left:738px;top:1029px;width:61px;height:51px;background:#a56a35"></div>
<div class="a" style="left:738px;top:1077px;width:61px;height:3px;background:#f7862a"></div>
<svg style="left:753px;top:1041px" width="30" height="28"><circle cx="15" cy="12" r="11" fill="#3ddc84"/><path d="M10 14 A5 5 0 0 1 20 14 Z" fill="#073042"/><rect x="13.5" y="5" width="3" height="5" fill="#073042"/><circle cx="15" cy="7" r="2.2" fill="#073042"/><path d="M8 27 L14 13 M22 27 L16 13" stroke="#e8e8e8" stroke-width="2.2"/><path d="M9 20 Q15 24 21 20" stroke="#e8e8e8" stroke-width="1.4" fill="none"/></svg>
<div class="a" style="left:815px;top:1040px;width:30px;height:30px;border-radius:2px;background:#f4f4f4"></div>
<svg style="left:821px;top:1046px" width="18" height="18"><path d="M9 1 L16 5 V13 L9 17 L2 13 V5 Z" stroke="#111" stroke-width="1.8" fill="none"/><path d="M9 9 L16 5 M9 9 L2 13 M9 9 V1" stroke="#111" stroke-width="1.6"/></svg>
<svg style="left:877px;top:1040px" width="30" height="30"><path d="M15 15 L2.44 7.75 A14.5 14.5 0 0 1 27.56 7.75 Z" fill="#db4437"/><path d="M15 15 L27.56 7.75 A14.5 14.5 0 0 1 15 29.5 Z" fill="#f4b400"/><path d="M15 15 L15 29.5 A14.5 14.5 0 0 1 2.44 7.75 Z" fill="#0f9d58"/><circle cx="15" cy="15" r="6.8" fill="#fff"/><circle cx="15" cy="15" r="5.2" fill="#4285f4"/></svg>
<div class="a" style="left:868px;top:1077px;width:50px;height:3px;background:#8ab2d8"></div>
<div class="a" style="left:924px;top:1029px;width:61px;height:51px;background:#4d5757"></div>
<div class="a" style="left:924px;top:1077px;width:61px;height:3px;background:#8ab2d8"></div>
<div class="a" style="left:940px;top:1043px;width:28px;height:24px;border-radius:3px;background:#3ecf7a"></div>
<div class="a" style="left:948px;top:1045px;width:12px;height:20px;border-radius:2px;background:#1a3a2a;border:2px solid #e8f8ee"></div>
<!-- tray -->
<svg style="left:1543px;top:1049px" width="18" height="12"><path d="M0 0 H9 Q12 0 12 3 V12 H9.5 V3 H2.5 V12 H0 Z M4.3 4.5 H6.8 V12 H4.3 Z M14 0 H16.5 V12 H14 Z" fill="#fff"/></svg>
<svg style="left:1573px;top:1046px" width="18" height="18"><circle cx="9" cy="9" r="8.8" fill="#fff"/><path d="M9 3 A6 6 0 1 1 3.5 11 M9 6 A3 3 0 1 1 6 9" stroke="#333" stroke-width="1.8" fill="none"/></svg>
<svg style="left:1604px;top:1049px" width="17" height="10"><path d="M1 9 L8.5 1.5 L16 9" stroke="#fff" stroke-width="1.5" fill="none"/></svg>
<svg style="left:1634px;top:1045px" width="17" height="17"><path d="M1 16 A15 15 0 0 1 16 1 M4 16 A12 12 0 0 1 16 4 M7 16 A9 9 0 0 1 16 7 M10 16 A6 6 0 0 1 16 10" stroke="#fff" stroke-width="1.1" fill="none"/><circle cx="15" cy="15" r="1.5" fill="#fff"/></svg>
<svg style="left:1663px;top:1048px" width="20" height="13"><rect x="0.7" y="1.5" width="16" height="10" stroke="#fff" stroke-width="1.3" fill="none"/><rect x="2.5" y="3.5" width="7" height="6" fill="#fff"/><rect x="17.5" y="4.5" width="2" height="4" fill="#fff"/></svg>
<svg style="left:1691px;top:1046px" width="21" height="17"><path d="M1 5.5 H4.5 L9 1.5 V15.5 L4.5 11.5 H1 Z" stroke="#fff" stroke-width="1.2" fill="none"/><path d="M12 5 A4 4 0 0 1 12 12 M15 3 A7 7 0 0 1 15 14 M18 1 A10 10 0 0 1 18 16" stroke="#fff" stroke-width="1.1" fill="none"/></svg>
<span class="t" style="left:1725px;top:1048px;font-size:15px;color:#fff">ENG</span>
<span class="t" style="left:1790px;top:1037px;font-size:15px;color:#fff">21:51</span>
<span class="t" style="left:1770px;top:1060px;font-size:15px;color:#fff">07-09-2020</span>
<svg style="left:1869px;top:1044px" width="30" height="28"><path d="M0 0 H20 V13 H6 L2 17 V13 H0 Z" fill="#fff"/><path d="M4 4 H16 M4 7 H16 M4 10 H12" stroke="#333" stroke-width="1"/><circle cx="20" cy="19" r="8" fill="#333a3a" stroke="#ddd" stroke-width="1.2"/><text x="16.5" y="23.5" font-family="Liberation Sans" font-size="12" font-weight="bold" fill="#fff">1</text></svg>
<div class="a" style="left:1914px;top:1029px;width:1px;height:51px;background:#6a7575"></div>

<!--/BOTTOM-->
</body></html>
